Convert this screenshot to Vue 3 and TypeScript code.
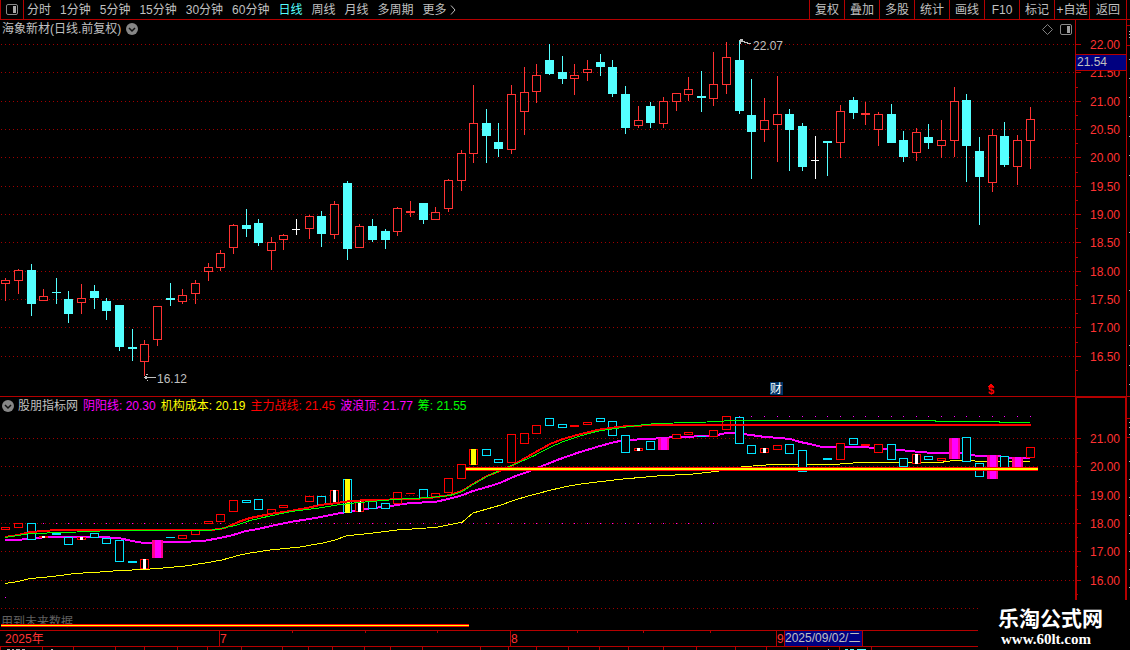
<script setup lang="ts">
type Kind = 'r' | 'c' | 'w'
type Candle = [x: number, kind: Kind, high: number, top: number, bottom: number, low: number]
type Box = [x: number, kind: 'r' | 'c', top: number, bottom: number, fill?: 'white' | 'yellow' | 'pink' | 'solid']

const periods = ['分时', '1分钟', '5分钟', '15分钟', '30分钟', '60分钟', '日线', '周线', '月线', '多周期', '更多']
const tools = ['复权', '叠加', '多股', '统计', '画线', 'F10', '标记', '+自选', '返回']

const readings = [
  { name: '阴阳线', value: '20.30', tone: 'magenta' },
  { name: '机构成本', value: '20.19', tone: 'yellow' },
  { name: '主力战线', value: '21.45', tone: 'red' },
  { name: '波浪顶', value: '21.77', tone: 'magenta' },
  { name: '筹', value: '21.55', tone: 'green' },
]

const priceScale: [number, string][] = [
  [44, '22.00'], [72, '21.50'], [101, '21.00'], [129, '20.50'], [157, '20.00'], [186, '19.50'],
  [214, '19.00'], [242, '18.50'], [271, '18.00'], [299, '17.50'], [327, '17.00'], [356, '16.50'],
]
const priceMinor = [58, 87, 115, 143, 172, 200, 228, 257, 285, 313, 342, 370]
const indicatorScale: [number, string][] = [
  [438, '21.00'], [466, '20.00'], [495, '19.00'], [523, '18.00'], [551, '17.00'], [580, '16.00'],
]
const indicatorMinor = [452, 481, 509, 537, 566, 594]

const candles: Candle[] = [
  [5, 'r', 278, 280, 284, 301], [18, 'r', 269, 270, 281, 294], [31, 'c', 264, 270, 304, 316],
  [43, 'r', 289, 296, 301, 301], [56, 'c', 278, 292, 293, 304], [68, 'c', 291, 299, 314, 323],
  [81, 'r', 284, 298, 303, 314], [94, 'c', 285, 291, 298, 309], [106, 'c', 298, 301, 311, 320],
  [119, 'c', 305, 305, 347, 351], [132, 'c', 329, 347, 349, 361], [144, 'r', 340, 344, 362, 376],
  [157, 'r', 306, 306, 340, 346], [170, 'c', 283, 298, 300, 306], [182, 'r', 289, 295, 302, 304],
  [195, 'r', 280, 283, 294, 304], [208, 'r', 263, 267, 272, 281], [220, 'r', 250, 253, 268, 271],
  [233, 'r', 224, 225, 248, 254], [246, 'c', 209, 225, 229, 237], [258, 'c', 219, 223, 243, 246],
  [271, 'r', 237, 242, 251, 270], [283, 'r', 234, 235, 240, 250], [296, 'w', 219, 229, 230, 235],
  [309, 'r', 215, 216, 229, 239], [321, 'c', 211, 216, 234, 247], [334, 'r', 201, 204, 235, 239],
  [347, 'c', 181, 183, 249, 260], [359, 'r', 224, 226, 248, 248], [372, 'c', 219, 226, 240, 242],
  [385, 'c', 229, 231, 240, 249], [397, 'r', 207, 208, 232, 236], [410, 'r', 201, 211, 213, 217],
  [423, 'c', 203, 203, 220, 224], [435, 'r', 207, 212, 220, 220], [448, 'r', 179, 180, 209, 212],
  [461, 'r', 150, 153, 181, 191], [473, 'r', 85, 123, 154, 163], [486, 'c', 109, 123, 136, 163],
  [498, 'c', 123, 142, 149, 157], [511, 'r', 85, 94, 150, 154], [524, 'r', 67, 92, 112, 135],
  [536, 'r', 64, 75, 92, 103], [549, 'c', 44, 60, 74, 75], [562, 'c', 56, 72, 79, 84],
  [574, 'r', 64, 75, 79, 95], [587, 'r', 60, 69, 73, 81], [600, 'c', 54, 62, 67, 76],
  [612, 'c', 60, 67, 94, 97], [625, 'c', 86, 94, 128, 134], [638, 'r', 106, 120, 126, 128],
  [650, 'c', 102, 106, 123, 128], [663, 'r', 97, 101, 124, 128], [676, 'r', 93, 93, 102, 111],
  [688, 'r', 77, 89, 95, 101], [701, 'c', 71, 96, 98, 112], [713, 'r', 52, 84, 99, 106],
  [726, 'r', 42, 57, 85, 94], [739, 'c', 40, 60, 111, 114], [751, 'c', 79, 115, 132, 179],
  [764, 'r', 98, 120, 130, 142], [777, 'r', 76, 114, 125, 162], [789, 'c', 109, 114, 130, 171],
  [802, 'c', 123, 126, 167, 171], [815, 'w', 136, 160, 161, 179], [827, 'c', 141, 141, 143, 176],
  [840, 'r', 105, 111, 143, 158], [853, 'c', 97, 100, 113, 119], [865, 'r', 102, 113, 115, 125],
  [878, 'r', 112, 114, 130, 146], [891, 'c', 104, 114, 143, 143], [903, 'c', 131, 140, 157, 162],
  [916, 'r', 128, 132, 153, 161], [928, 'c', 124, 137, 143, 149], [941, 'r', 120, 140, 146, 158],
  [954, 'r', 87, 101, 141, 157], [966, 'c', 94, 100, 146, 182], [979, 'c', 137, 151, 177, 225],
  [992, 'r', 129, 135, 183, 192], [1004, 'c', 122, 136, 165, 167], [1017, 'r', 135, 140, 167, 185],
  [1030, 'r', 107, 119, 141, 169],
]

const boxes: Box[] = [
  [5, 'r', 527, 530], [18, 'r', 523, 528], [31, 'c', 523, 540], [43, 'r', 536, 538, 'white'],
  [56, 'c', 533, 535, 'solid'], [68, 'c', 537, 545], [81, 'r', 537, 540, 'white'], [94, 'c', 533, 538],
  [106, 'c', 538, 544], [119, 'c', 540, 562], [132, 'c', 561, 563, 'solid'], [144, 'r', 559, 569, 'white'],
  [157, 'r', 540, 558, 'pink'], [170, 'c', 537, 538, 'solid'], [182, 'r', 535, 539], [195, 'r', 530, 535],
  [208, 'r', 521, 524], [220, 'r', 514, 522], [233, 'r', 500, 512], [246, 'c', 500, 503],
  [258, 'c', 499, 510], [271, 'r', 509, 514], [283, 'r', 505, 508], [309, 'r', 496, 502],
  [321, 'c', 496, 505], [334, 'r', 490, 504, 'white'], [347, 'c', 479, 513, 'yellow'],
  [359, 'r', 501, 512, 'white'], [372, 'c', 501, 509], [385, 'c', 503, 509], [397, 'r', 492, 504],
  [410, 'r', 493, 494, 'solid'], [423, 'c', 489, 498], [435, 'r', 493, 497], [448, 'r', 478, 493],
  [461, 'r', 464, 479], [473, 'r', 449, 465, 'yellow'], [486, 'c', 449, 456], [498, 'c', 459, 463],
  [511, 'r', 434, 463], [524, 'r', 433, 444], [536, 'r', 425, 434], [549, 'c', 418, 426],
  [562, 'c', 424, 428], [574, 'r', 425, 427, 'solid'], [587, 'r', 422, 425], [600, 'c', 418, 422],
  [612, 'c', 421, 436], [625, 'c', 435, 453], [638, 'r', 448, 451, 'white'], [650, 'c', 441, 450],
  [663, 'r', 438, 450, 'pink'], [676, 'r', 434, 439], [688, 'r', 432, 435], [701, 'c', 436, 437, 'solid'],
  [713, 'r', 430, 437], [726, 'r', 416, 430], [739, 'c', 417, 444], [751, 'c', 445, 454],
  [764, 'r', 448, 453, 'white'], [777, 'r', 445, 450], [789, 'c', 444, 454], [802, 'c', 450, 472],
  [827, 'c', 458, 460, 'solid'], [840, 'r', 443, 460], [853, 'c', 438, 445], [865, 'r', 444, 446, 'solid'],
  [878, 'r', 444, 453], [891, 'c', 444, 460], [903, 'c', 458, 467], [916, 'r', 454, 464, 'white'],
  [928, 'c', 456, 460], [941, 'r', 458, 461], [954, 'r', 438, 459, 'pink'], [966, 'c', 437, 462],
  [979, 'c', 463, 477], [992, 'r', 455, 479, 'pink'], [1004, 'c', 456, 468], [1017, 'r', 457, 468, 'pink'],
  [1030, 'r', 447, 458],
]

const yinYang = '5,540 18,540 35,538 50,537 100,537 119,538 132,541 144,543 180,542 203,541 220,538 233,535 246,531 258,529 271,526 290,522 309,519 321,517 335,514 347,512 360,510 372,508 385,507 397,505 410,503 435,502 448,499 460,496 473,491 487,487 500,483 513,477 530,471 542,466 560,459 577,453 600,446 615,442 625,440 650,439 663,438 676,437 713,436 726,433 735,433 751,435 765,437 780,438 790,439 800,442 810,444 822,447 863,447 887,449 900,450 920,452 933,453 963,453 977,456 997,456 1012,458 1030,458'
const cost = '5,583.5 18,581.5 30,578.5 43,577.5 60,575.5 75,573.5 100,572 120,570.5 144,569.5 163,568 185,566 205,563 222,560 238,555.5 250,553 270,550 300,547 323,543 335,540 347,535.7 367,533.7 397,530 437,527.3 462,522.3 473,513 487,509 500,505.3 513,500.7 527,496.3 550,490.3 567,486.3 583,483.7 620,479.3 657,476 693,474 717,471.3 743,466.7 773,464.5 833,464.5 860,462.5 940,462.5 954,460.5 972,460.5 978,461.5 1030,461.5'
const mainForce = '5,537 18,535 30,532 57,530 212,530 225,528 238,522 250,518 260,516 270,514 290,511 307,508 320,505 337,503 350,501 370,500 410,499 430,498 450,495 462,491 473,484 487,476 500,471 513,465 527,457 550,444 563,439 577,435 597,430 610,428 627,426 657,425 1031,425'
const chips = '5,537.5 30,533.5 65,532.5 112,530.5 208,530.5 220,529 237,525 250,520.5 270,516 290,511.7 317,508.3 337,505 357,502.7 397,499.3 430,497.5 450,495.5 462,491.7 473,484.5 487,476.5 503,469 517,463.3 533,456.3 550,447.3 563,441.7 580,436 597,431.3 610,429.3 630,426.5 643,424.7 657,423.5 707,422 733,420.5 935,420.5 936,421.5 999,421.5 1000,422.5 1030,422.5'

const lowDots = candles.map((c) => c[0]).filter((x) => x >= 31 && x <= 713)
const highDots = candles.map((c) => c[0]).filter((x) => x >= 726)

const tone: Record<Kind, string> = { r: '#ff3232', c: '#54ffff', w: '#ffffff' }
const boxTone = { r: '#ff0000', c: '#00e4ff' }

const monthTicks = [292, 365, 437, 577, 643, 710]
const tabTicks = [0, 42, 73, 115, 144, 177, 207, 241, 282, 308, 332, 364, 390, 422, 480, 508, 536, 568, 599, 628, 663, 696, 735, 766, 807, 839, 871]
const sideMarks = [31, 34, 37, 59, 78, 97, 116, 136, 155, 175, 232, 290, 345, 365, 384]
const sideMarksLow = [422, 427, 434, 461, 479, 497, 515, 533, 551, 569, 587]
</script>

<template>
  <main class="terminal">
    <header class="toolbar">
      <button class="layout-btn" aria-label="布局">
        <svg width="12" height="11" viewBox="0 0 12 11">
          <rect x="0.5" y="0.5" width="11" height="10" rx="1.5" fill="none" stroke="#8a8a8a" />
          <rect x="7" y="2" width="3" height="7" fill="#a8a8a8" />
        </svg>
      </button>
      <nav class="periods">
        <button v-for="p in periods" :key="p" :class="{ active: p === '日线' }">{{ p }}</button>
        <svg class="more" width="6" height="10" viewBox="0 0 6 10"><path d="M1 0.5 5 5 1 9.5" fill="none" stroke="#c0c0c0" /></svg>
      </nav>
      <div class="tools">
        <button v-for="t in tools" :key="t">{{ t }}</button>
      </div>
    </header>

    <section class="panel">
      <svg class="plot" viewBox="0 20 1130 376" shape-rendering="crispEdges">
        <g stroke="#a00000" stroke-dasharray="1 3">
          <line v-for="[y] in priceScale" :key="y" x1="1" x2="1074" :y1="y + 0.5" :y2="y + 0.5" />
        </g>
        <g fill="#b40000">
          <rect x="1075" y="20" width="1" height="376" />
          <rect x="1126" y="20" width="1" height="376" />
          <rect v-for="[y] in priceScale" :key="y" x="1076" :y="y" width="5" height="1" />
          <rect v-for="y in priceMinor" :key="y" x="1076" :y="y" width="2" height="1" />
          <rect x="1127" y="25" width="3" height="1" />
          <rect x="1127" y="45" width="3" height="1" />
        </g>
        <rect v-for="y in sideMarks" :key="y" x="1129" :y="y" width="1" height="1" fill="#b0b0b0" />
        <g class="scale">
          <text v-for="[y, label] in priceScale" :key="y" x="1090" :y="y + 5">{{ label }}</text>
        </g>
        <rect x="1076" y="54" width="50" height="17" fill="#b40000" />
        <rect x="1076" y="55" width="50" height="15" fill="#000080" />
        <text x="1077" y="66" class="note">21.54</text>

        <g v-for="[x, k, high, top, bottom, low] in candles" :key="x">
          <rect :x="x" :y="high" width="1" :height="low - high" :fill="tone[k]" />
          <rect :x="x - 4" :y="top" :width="k === 'w' ? 8 : 9" :height="bottom - top" :fill="tone[k]" />
          <rect v-if="k === 'r' && bottom - top > 2" :x="x - 3" :y="top + 1" width="7" :height="bottom - top - 2" fill="#000" />
        </g>

        <g fill="none" stroke="#c0c0c0">
          <path d="M144 377.5H156M148 374.5H146M147 380.5H148" />
          <path d="M145 376.5H147M145 378.5H147M739 40.5H743M741 41.5H745M744 42.5H748M747 43.5H751M740 39.5H743M740 41V44" />
        </g>
        <text x="157" y="383" class="note">16.12</text>
        <text x="753" y="50" class="note">22.07</text>

        <rect x="770" y="382" width="13" height="13" fill="#003468" />
        <text x="770" y="393" class="mark">财</text>
        <path d="M988 387h6v-1h-1v-1h-1v-1h-2v1h-1v1h-1z" fill="#f00" />
        <text x="991" y="394" class="dollar">$</text>
      </svg>
      <div class="caption">
        <span>海象新材(日线.前复权)</span>
        <button class="round" aria-label="展开">
          <svg width="12" height="12" viewBox="0 0 12 12"><circle cx="6" cy="6" r="6" fill="#868686" /><path d="M3 5 6 8 9 5" fill="none" stroke="#101010" stroke-width="1.5" /></svg>
        </button>
        <span class="window-icons">
          <svg width="11" height="11" viewBox="0 0 11 11"><path d="M5.5 0.5 10.5 5.5 5.5 10.5 0.5 5.5Z" fill="none" stroke="#808080" /></svg>
          <svg width="12" height="11" viewBox="0 0 12 11"><rect x="0.5" y="0.5" width="11" height="10" rx="1.5" fill="none" stroke="#8a8a8a" /><rect x="7" y="2" width="3" height="7" fill="#a0a0a0" /></svg>
        </span>
      </div>
    </section>

    <section class="panel">
      <svg class="plot" viewBox="0 396 1130 234" shape-rendering="crispEdges">
        <g stroke="#a00000" stroke-dasharray="1 3">
          <line v-for="[y] in indicatorScale" :key="y" x1="1" x2="1074" :y1="y + 0.5" :y2="y + 0.5" />
          <line x1="1" x2="1074" y1="608.5" y2="608.5" />
        </g>
        <g fill="#b40000">
          <rect x="0" y="396" width="1130" height="1" />
          <rect x="1075" y="396" width="52" height="2" />
          <rect x="1075" y="396" width="2" height="204" />
          <rect x="1125" y="396" width="2" height="204" />
          <rect v-for="[y] in indicatorScale" :key="y" x="1076" :y="y" width="5" height="1" />
          <rect v-for="y in indicatorMinor" :key="y" x="1077" :y="y" width="1" height="1" />
          <rect x="1127" y="418" width="3" height="1" />
          <rect x="1127" y="437" width="3" height="1" />
        </g>
        <rect v-for="y in sideMarksLow" :key="y" x="1129" :y="y" width="1" height="1" fill="#b0b0b0" />
        <g class="scale">
          <text v-for="[y, label] in indicatorScale" :key="y" x="1090" :y="y + 5">{{ label }}</text>
        </g>

        <g fill="#ff00ff">
          <rect v-for="x in lowDots" :key="x" :x="x" y="523" width="1" height="1" />
          <rect v-for="x in highDots" :key="x" :x="x" y="416" width="1" height="1" />
          <rect x="5" y="597" width="1" height="1" />
        </g>
        <polyline :points="yinYang" class="line magenta" stroke-width="2" />
        <polyline :points="cost" class="line yellow" />

        <g v-for="[x, k, top, bottom, fill] in boxes" :key="x">
          <template v-if="fill === 'pink'">
            <rect :x="x - 5" :y="top" width="11" :height="bottom - top" fill="#ff0090" />
            <rect :x="x - 2" :y="top" width="6" :height="bottom - top" fill="#ff00ff" />
          </template>
          <template v-else>
            <rect :x="x - 4" :y="top" width="9" :height="bottom - top" :fill="boxTone[k]" />
            <rect v-if="fill !== 'solid' && bottom - top > 2" :x="x - 3" :y="top + 1" width="7" :height="bottom - top - 2" fill="#000" />
          </template>
          <rect v-if="fill === 'white'" :x="x - 1" :y="top" width="3" :height="bottom - top" fill="#fff" />
          <rect v-if="fill === 'yellow'" :x="x - 2" :y="top" width="5" :height="bottom - top" fill="#ff0" />
        </g>

        <polyline :points="mainForce" class="line red" stroke-width="2" />
        <polyline :points="chips" class="line green" />
        <rect x="466" y="467" width="572" height="4" fill="#f00" />
        <rect x="466" y="468" width="572" height="2" fill="#ff0" />
        <text x="1" y="626" class="hint">用到未来数据</text>
        <rect x="1" y="624" width="468" height="3" fill="#f00" />
        <rect x="1" y="625" width="468" height="1" fill="#ff0" />
      </svg>
      <div class="caption lower">
        <button class="round" aria-label="展开">
          <svg width="12" height="12" viewBox="0 0 12 12"><circle cx="6" cy="6" r="6" fill="#868686" /><path d="M3 5 6 8 9 5" fill="none" stroke="#101010" stroke-width="1.5" /></svg>
        </button>
        <span>股朋指标网</span>
        <span v-for="r in readings" :key="r.name" :class="r.tone">{{ r.name }}: {{ r.value }}</span>
      </div>
    </section>

    <svg class="plot" viewBox="0 630 1130 20" shape-rendering="crispEdges">
      <g fill="#b40000">
        <rect x="0" y="630" width="1130" height="1" />
        <rect x="0" y="646" width="1130" height="1" />
        <rect x="219" y="630" width="1" height="16" />
        <rect x="510" y="630" width="1" height="16" />
        <rect x="776" y="630" width="1" height="16" />
        <rect x="784" y="630" width="79" height="16" />
        <rect v-for="x in monthTicks" :key="x" :x="x" y="631" width="1" height="2" />
        <rect v-for="x in tabTicks" :key="x" :x="x" y="647" width="1" height="3" />
      </g>
      <rect x="785" y="631" width="77" height="15" fill="#000080" />
      <g class="scale">
        <text x="5" y="643">2025年</text>
        <text x="220" y="643">7</text>
        <text x="511" y="643">8</text>
        <text x="777" y="643">9</text>
      </g>
      <text x="785" y="642" class="note">2025/09/02/二</text>
      <path d="M7 649.5h3M12 649.5h2M16 649.5h4M22 649.5h3M51 649.5h2M828 649.5h1" stroke="#b0b0b0" />
      <path d="M845 649.5h3M850 649.5h4M857 649.5h9" stroke="#54ffff" />
    </svg>

    <aside class="brand">
      <strong>乐淘公式网</strong>
      <span>www.60lt.com</span>
    </aside>
  </main>
</template>

<style>
body {
  margin: 0;
  background: #000;
}
</style>

<style scoped>
.terminal {
  position: relative;
  overflow: hidden;
  background: #000;
  color: #c0c0c0;
  font: 12px/16px "Liberation Sans", "Noto Sans CJK SC", sans-serif;
}
button {
  margin: 0;
  padding: 0;
  border: 0;
  background: none;
  color: inherit;
  font: inherit;
  white-space: nowrap;
}
.toolbar {
  display: flex;
  box-sizing: border-box;
  height: 20px;
  padding-right: 3px;
  border-bottom: 1px solid #b40000;
}
.layout-btn {
  display: flex;
  align-items: center;
  justify-content: center;
  box-sizing: border-box;
  width: 24px;
  border: solid #b40000;
  border-width: 0 1px;
}
.periods {
  display: flex;
  align-items: center;
  flex: 1;
  gap: 9px;
  padding-left: 3px;
}
.periods .active {
  color: #54ffff;
}
.more {
  margin-left: -6px;
}
.tools {
  display: flex;
  border-right: 1px solid #b40000;
}
.tools button {
  box-sizing: border-box;
  width: 35px;
  border-left: 1px solid #b40000;
}
.tools button:last-child {
  width: 37px;
}
.panel {
  display: grid;
}
.panel > * {
  grid-area: 1 / 1;
}
.plot {
  display: block;
  width: 100%;
  height: auto;
}
.caption {
  display: flex;
  align-self: start;
  align-items: center;
  gap: 5px;
  height: 18px;
  padding-left: 2px;
  white-space: nowrap;
}
.lower {
  height: 20px;
}
.round,
.window-icons {
  display: flex;
}
.lower .round {
  margin-right: -1px;
}
.window-icons {
  gap: 7px;
  margin-left: auto;
  padding-right: 58px;
}
.line {
  fill: none;
}
.magenta {
  color: #ff00ff;
  stroke: #ff00ff;
}
.yellow {
  color: #ffff00;
  stroke: #ffff00;
}
.red {
  color: #ff0000;
  stroke: #ff0000;
}
.green {
  color: #00ff00;
  stroke: #00ff00;
}
.scale {
  fill: #ff3232;
}
.note {
  fill: #c0c0c0;
}
.mark {
  fill: #fff;
}
.hint {
  fill: #606060;
}
.dollar {
  fill: #f00;
  font-size: 11px;
  font-weight: bold;
  text-anchor: middle;
}
.brand {
  position: absolute;
  right: 0;
  bottom: 0;
  display: flex;
  flex-direction: column;
  box-sizing: border-box;
  width: 152px;
  height: 50px;
  padding: 8px 0 0 20px;
  background: #000;
  color: #fff;
  font-family: "Liberation Serif", "Noto Sans CJK SC", serif;
}
.brand strong {
  font-size: 21px;
  line-height: 22px;
}
.brand span {
  padding-left: 3px;
  font-size: 15px;
  font-weight: bold;
  line-height: 18px;
}
</style>
